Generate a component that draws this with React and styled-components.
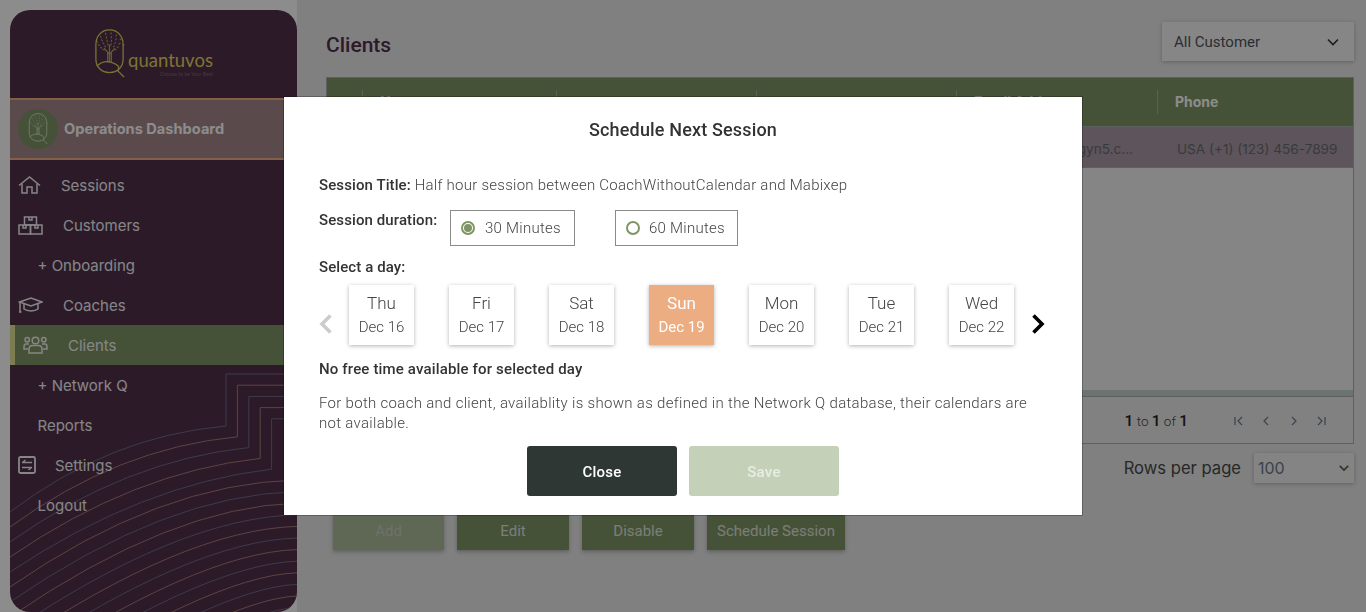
import React from "react";
import styled, { createGlobalStyle } from "styled-components";

const GlobalStyle = createGlobalStyle`
  html, body {
    margin: 0;
    padding: 0;
    height: 100%;
    overflow: hidden;
    background: #fff;
  }
  * {
    box-sizing: border-box;
  }
`;

const DIN = `Roboto, "Liberation Sans", sans-serif`;
const WIDE = `Inter, "Liberation Sans", sans-serif`;

const Page = styled.div`
  display: flex;
  width: 100%;
  height: 100vh;
  font-family: ${DIN};
`;

/* ---------- sidebar ---------- */

const Sidebar = styled.aside`
  position: relative;
  flex: 0 0 287px;
  height: 602px;
  margin: 10px 0 0 10px;
  background: #50304c;
  border-radius: 20px;
  overflow: hidden;
  font-family: ${WIDE};
  color: #fff;
`;

const Waves = styled.svg`
  position: absolute;
  left: 0;
  top: 0;
`;

const LogoArea = styled.div`
  height: 88px;
  display: flex;
  justify-content: center;
  padding-top: 19px;
  color: #e3d360;
`;

const LogoWords = styled.div`
  display: flex;
  flex-direction: column;
  align-items: flex-end;
  margin: 20px 0 0 3px;
`;

const LogoName = styled.span`
  font-family: Lato, sans-serif;
  font-size: 18.5px;
  line-height: 22px;
`;

const LogoTag = styled.span`
  font-family: Lato, sans-serif;
  font-size: 5.2px;
  line-height: 7px;
  color: #7f6a6a;
`;

const Band = styled.div`
  display: flex;
  align-items: center;
  height: 62px;
  padding-left: 8px;
  gap: 6px;
  background: #a4878a;
  border-top: 2px solid #edad82;
  border-bottom: 2px solid #edad82;
  font-size: 14.6px;
  font-weight: 700;
`;

const BandBadge = styled.div`
  width: 40px;
  height: 40px;
  border-radius: 50%;
  background: #7f9564;
  display: flex;
  align-items: center;
  justify-content: center;
  color: #dfe6d4;
`;

const Nav = styled.nav`
  position: relative;
  margin-top: 5px;
`;

const NavItem = styled.div`
  display: flex;
  align-items: center;
  height: 40px;
  gap: ${(p) => p.$gap || "20px"};
  padding-left: ${(p) => (p.$sub ? "27.5px" : "8px")};
  font-size: 15px;
  background: ${(p) => (p.$active ? "#7f9564" : "transparent")};
  border-left: ${(p) => (p.$active ? "5px solid #e3e39a" : "0")};
  color: #f4f4f4;
`;

const NavIcon = styled.svg`
  flex: none;
  fill: none;
  stroke: currentColor;
  stroke-width: 1.5;
`;

/* ---------- main page ---------- */

const Main = styled.main`
  flex: 1;
  min-width: 0;
  background: #e9e9e9;
  padding: 22px 12px 0 29px;
  display: flex;
  flex-direction: column;
`;

const TopRow = styled.div`
  display: flex;
  justify-content: space-between;
  align-items: center;
  height: 39px;
`;

const PageTitle = styled.h1`
  margin: 0;
  padding-top: 6px;
  font-size: 21px;
  font-weight: 500;
  color: #50304c;
`;

const CustomerSelect = styled.div`
  width: 192px;
  height: 39px;
  display: flex;
  align-items: center;
  justify-content: space-between;
  padding: 1px 15px 0 12px;
  background: #f5f5f5;
  box-shadow: 0 1px 4px rgba(0, 0, 0, 0.25);
  font-size: 15px;
  color: #4e5360;
`;

const Table = styled.div`
  margin-top: 16px;
  height: 367px;
  display: flex;
  flex-direction: column;
  border: 1px solid #aab0ac;
  font-family: ${WIDE};
`;

const Columns = `35px 194px 200px 200px 201px 1fr`;

const HeaderRow = styled.div`
  display: grid;
  grid-template-columns: ${Columns};
  height: 49px;
  flex: none;
  background: #7f9564;
  border-bottom: 1px solid #aab0ac;
  align-items: center;
  color: #fff;
  font-size: 14px;
  font-weight: 700;
`;

const HeaderCell = styled.div`
  height: 24px;
  line-height: 24px;
  padding-left: ${(p) => (p.$first ? "0" : "17px")};
  border-left: ${(p) => (p.$first ? "0" : "1px solid #a3b28f")};
`;

const DataRow = styled.div`
  display: grid;
  grid-template-columns: ${Columns};
  height: 41px;
  flex: none;
  padding-top: 3px;
  background: #a99ba7;
  border-bottom: 1px solid #aab0ac;
  align-items: center;
  font-size: 13.6px;
  color: #6a6a70;
`;

const DataCell = styled.div`
  white-space: nowrap;
  overflow: hidden;
  text-align: ${(p) => (p.$right ? "right" : "left")};
  padding: ${(p) => (p.$right ? "0 24px 0 0" : "0 0 0 20px")};
`;

const TableBody = styled.div`
  flex: 1;
  background: #f3f3f3;
`;

const ScrollTrack = styled.div`
  height: 6px;
  flex: none;
  background: #c3d4cd;
`;

const TableFooter = styled.div`
  height: 47px;
  flex: none;
  display: flex;
  align-items: center;
  justify-content: flex-end;
  gap: 43px;
  padding: 1px 24px 0 0;
  background: #ebebeb;
  border-top: 1px solid #aab0ac;
  font-family: ${DIN};
  font-size: 13.5px;
  font-weight: 300;
  color: #444;
`;

const PageCount = styled.span`
  b {
    color: #222;
    font-weight: 500;
    font-size: 15.5px;
  }
`;

const Pager = styled.div`
  display: flex;
  gap: 14px;
  color: #6c7a8a;
`;

const PagerIcon = styled.svg`
  fill: none;
  stroke: currentColor;
  stroke-width: 1.2;
`;

const RowsLine = styled.div`
  margin-top: 9px;
  height: 30px;
  display: flex;
  justify-content: flex-end;
  align-items: center;
  gap: 13px;
  font-family: ${WIDE};
  font-size: 16.6px;
  line-height: 32px;
  color: #4a4a4a;
`;

const RowsSelect = styled.div`
  width: 100px;
  height: 30px;
  display: flex;
  align-items: center;
  justify-content: space-between;
  padding: 0 5px 0 4px;
  background: #f0f0f0;
  box-shadow: 0 1px 4px rgba(0, 0, 0, 0.25);
  font-size: 16px;
  line-height: 30px;
  color: #6c7a8a;
`;

const Actions = styled.div`
  display: flex;
  margin-top: 29px;
  padding-left: 7px;
  gap: 13px;
`;

const ActionButton = styled.div`
  width: ${(p) => p.$w || "112px"};
  height: 38px;
  display: flex;
  align-items: center;
  justify-content: center;
  background: ${(p) => (p.$off ? "#aebd9c" : "#7f9564")};
  box-shadow: 0 2px 4px rgba(0, 0, 0, 0.25);
  font-size: 15px;
  color: ${(p) => (p.$off ? "#c9cfc3" : "#e0e4dc")};
`;

/* ---------- dialog ---------- */

const Overlay = styled.div`
  position: fixed;
  inset: 0;
  display: flex;
  align-items: center;
  justify-content: center;
  background: rgba(0, 0, 0, 0.45);
`;

const Dialog = styled.div`
  width: 798px;
  height: 418px;
  padding: 21px 35px 19px;
  background: #fff;
  box-shadow: 0 0 0 1px rgba(0, 0, 0, 0.25);
  color: #444;
  font-size: 15px;
  font-weight: 300;
  letter-spacing: 0.25px;
  line-height: 20px;
`;

const DialogTitle = styled.h2`
  margin: 0;
  font-size: 18px;
  line-height: 24px;
  font-weight: 500;
  letter-spacing: 0.16px;
  text-align: center;
  color: #333;
`;

const Strong = styled.span`
  font-weight: 500;
  letter-spacing: 0.1px;
  color: #333;
`;

const TitleLine = styled.div`
  margin-top: 33px;
`;

const DurationRow = styled.div`
  display: flex;
  margin-top: 15px;
`;

const DurationLabel = styled(Strong)`
  width: 131px;
`;

const DurationBox = styled.div`
  width: ${(p) => p.$w};
  height: 36px;
  margin-right: 40px;
  display: flex;
  align-items: center;
  gap: ${(p) => p.$gap};
  padding-left: 10px;
  border: 1px solid #8a8a8a;
`;

const Radio = styled.span`
  width: 14px;
  height: 14px;
  border-radius: 50%;
  border: 2px solid #7f9564;
  display: flex;
  align-items: center;
  justify-content: center;
  &::after {
    content: "";
    width: 8px;
    height: 8px;
    border-radius: 50%;
    background: ${(p) => (p.$on ? "#7f9564" : "transparent")};
  }
`;

const SelectLabel = styled(Strong)`
  display: block;
  margin-top: 11px;
`;

const DaysRow = styled.div`
  display: flex;
  align-items: center;
  margin-top: 8px;
`;

const Chevron = styled.svg`
  flex: none;
  margin-top: 18px;
  fill: none;
  stroke: ${(p) => p.$color};
  stroke-width: 3.6;
`;

const Days = styled.div`
  display: flex;
  gap: 35px;
  margin: 0 18px 0 17px;
`;

const DayCard = styled.div`
  width: 65px;
  height: 60px;
  display: flex;
  flex-direction: column;
  align-items: center;
  padding-top: 7px;
  background: ${(p) => (p.$on ? "#edad82" : "#fff")};
  color: ${(p) => (p.$on ? "#fff" : "#444")};
  font-weight: ${(p) => (p.$on ? 400 : 300)};
  letter-spacing: 0;
  box-shadow: 0 1px 4px rgba(0, 0, 0, 0.3);
`;

const Weekday = styled.span`
  font-size: 17px;
  line-height: 22px;
`;

const DayDate = styled.span`
  margin-top: 3px;
  font-size: 15px;
  line-height: 20px;
`;

const NoTime = styled(Strong)`
  display: block;
  margin-top: 14px;
  letter-spacing: 0.16px;
`;

const Note = styled.p`
  margin: 14px 0 0;
  letter-spacing: 0.3px;
`;

const DialogButtons = styled.div`
  display: flex;
  justify-content: center;
  gap: 12px;
  margin-top: 13px;
`;

const DialogButton = styled.button`
  all: unset;
  width: 150px;
  height: 50px;
  text-align: center;
  border-radius: 3px;
  font-size: 15px;
  font-weight: 500;
  line-height: 52px;
  color: ${(p) => (p.$dark ? "#fff" : "#e8ede1")};
  background: ${(p) => (p.$dark ? "#2f3735" : "#c5d0b9")};
`;

/* ---------- drawings ---------- */

// tree branches fan out from the trunk inside the arch
const rays = [];
[7, 11, 15, 19].forEach((r, ring) => {
  for (let a = -165 + ring * 6; a <= -15; a += 30 - ring * 3) {
    const rad = (a * Math.PI) / 180;
    const x = 17 + r * Math.cos(rad) * 0.8;
    const y = 25 + r * Math.sin(rad);
    rays.push(`M${x.toFixed(1)} ${y.toFixed(1)}l${(2.4 * Math.cos(rad)).toFixed(1)} ${(2.4 * Math.sin(rad)).toFixed(1)}`);
  }
});

const LogoMark = ({ size = 31, color = "#e3d360" }) => (
  <svg width={size} height={size * 1.58} viewBox="0 0 34 54" fill="none" stroke={color} strokeWidth="1.4">
    <path d="M17 1C8 1 2 8 2 17V33C2 42 8 48 17 48C26 48 32 42 32 33V17C32 8 26 1 17 1Z" />
    <path d="M3 41C8 36 14 35 20 37C26 39 29 42 26 46L33 53" />
    <path d="M17 37V17M15 37V25M19 37V25M17 28L11 21M17 28L23 21" opacity="0.75" />
    <path d={rays.join("")} strokeWidth="1.2" opacity="0.7" />
  </svg>
);

const HomeIcon = () => (
  <NavIcon width="23" height="18" viewBox="0 0 23 18">
    <path d="M1 9.5L11.5 1L22 9.5" />
    <path d="M4 7.5V17H9V11H14V17H19V7.5" />
  </NavIcon>
);

const BoxesIcon = () => (
  <NavIcon width="25" height="19" viewBox="0 0 25 19">
    <rect x="6.5" y="1" width="12" height="8" />
    <rect x="1" y="9" width="11.5" height="9" />
    <rect x="12.5" y="9" width="11.5" height="9" />
    <path d="M11 1V4H14V1M5 9V12H8V9M17 9V12H20V9" />
  </NavIcon>
);

const CapIcon = () => (
  <NavIcon width="25" height="16" viewBox="0 0 25 16">
    <path d="M1.5 5L13 1L24 5L13 9Z" />
    <path d="M6 7V12C9 14.5 17 14.5 20 12V7" />
    <path d="M2 5.5V15M1 15H3.5" />
  </NavIcon>
);

const UsersIcon = () => (
  <NavIcon width="25" height="18" viewBox="0 0 25 18">
    <circle cx="12.5" cy="4.5" r="3.3" />
    <circle cx="4.2" cy="3.7" r="2.2" />
    <circle cx="20.8" cy="3.7" r="2.2" />
    <path d="M6 17V13C6 10.5 8 9.5 10 9.5H15C17 9.5 19 10.5 19 13V17Z" />
    <path d="M6 8H3C1.5 8 1 9.5 1 11V13H5M19 8H22C23.5 8 24 9.5 24 11V13H20" />
  </NavIcon>
);

const SettingsIcon = () => (
  <NavIcon width="18" height="18" viewBox="0 0 18 18">
    <rect x="1" y="1" width="16" height="16" rx="1.5" strokeWidth="1.8" />
    <path d="M4 6.5H14M7.5 4L4.5 6.5M4 11.5H14M10.5 14L13.5 11.5" />
  </NavIcon>
);

const SmallChevronDown = ({ color = "currentColor", w = 2, width = 12 }) => (
  <svg width={width} height="8" viewBox="0 0 12 8" fill="none" stroke={color} strokeWidth={w}>
    <path d="M1 1.5L6 6.5L11 1.5" />
  </svg>
);

const pagerPaths = ["M2 1V9M9 1L5 5L9 9", "M7 1L3 5L7 9", "M3 1L7 5L3 9", "M1 1L5 5L1 9M8 1V9"];

// concentric lines in the lower part of the sidebar
const wavePath = (i) => {
  const startY = 502 + 15 * i;
  if (i < 5) {
    const x = 216 + 11.4 * i;
    const y = 416 + 10.8 * i;
    const top = 364 + 11.2 * i;
    return `M0 ${startY} Q${100 + 8 * i} ${426 + 12 * i} ${x} ${y} V${top} H287`;
  }
  const endY = 470 + 11.6 * (i - 5);
  return `M0 ${startY} Q${120 + 6 * i} ${endY + 3} 287 ${endY}`;
};

const waves = Array.from({ length: 18 }, (_, i) => i);

const days = [
  ["Thu", "Dec 16"],
  ["Fri", "Dec 17"],
  ["Sat", "Dec 18"],
  ["Sun", "Dec 19"],
  ["Mon", "Dec 20"],
  ["Tue", "Dec 21"],
  ["Wed", "Dec 22"],
];

export default function App() {
  return (
    <Page>
      <GlobalStyle />
      <Sidebar>
        <Waves width="287" height="602" viewBox="0 0 287 602" fill="none">
          {waves.map((i) => (
            <path key={i} d={wavePath(i)} stroke={i % 2 ? "#a97c74" : "#716d83"} strokeWidth="1" />
          ))}
        </Waves>
        <LogoArea>
          <LogoMark />
          <LogoWords>
            <LogoName>quantuvos</LogoName>
            <LogoTag>Choose to be Your Best</LogoTag>
          </LogoWords>
        </LogoArea>
        <Band>
          <BandBadge>
            <LogoMark size={20} color="#dfe6d4" />
          </BandBadge>
          Operations Dashboard
        </Band>
        <Nav>
          <NavItem><HomeIcon />Sessions</NavItem>
          <NavItem><BoxesIcon />Customers</NavItem>
          <NavItem $sub>+ Onboarding</NavItem>
          <NavItem><CapIcon />Coaches</NavItem>
          <NavItem $active><UsersIcon />Clients</NavItem>
          <NavItem $sub>+ Network Q</NavItem>
          <NavItem $sub>Reports</NavItem>
          <NavItem $gap="19px"><SettingsIcon />Settings</NavItem>
          <NavItem $sub>Logout</NavItem>
        </Nav>
      </Sidebar>

      <Main>
        <TopRow>
          <PageTitle>Clients</PageTitle>
          <CustomerSelect>
            All Customer
            <SmallChevronDown color="#333" w={1.6} />
          </CustomerSelect>
        </TopRow>
        <Table>
          <HeaderRow>
            <HeaderCell $first />
            <HeaderCell>Name</HeaderCell>
            <HeaderCell />
            <HeaderCell />
            <HeaderCell>Email Address</HeaderCell>
            <HeaderCell>Phone</HeaderCell>
          </HeaderRow>
          <DataRow>
            <DataCell />
            <DataCell>Mabixep</DataCell>
            <DataCell />
            <DataCell />
            <DataCell $right>mabixep@xgyn5.c...</DataCell>
            <DataCell>USA (+1) (123) 456-7899</DataCell>
          </DataRow>
          <TableBody />
          <ScrollTrack />
          <TableFooter>
            <PageCount>
              <b>1</b> to <b>1</b> of <b>1</b>
            </PageCount>
            <Pager>
              {pagerPaths.map((d) => (
                <PagerIcon key={d} width="14" height="10" viewBox="0 0 10 10">
                  <path d={d} />
                </PagerIcon>
              ))}
            </Pager>
          </TableFooter>
        </Table>
        <RowsLine>
          Rows per page
          <RowsSelect>
            100
            <SmallChevronDown color="#56663e" width={10} />
          </RowsSelect>
        </RowsLine>
        <Actions>
          <ActionButton $off $w="111px">Add</ActionButton>
          <ActionButton>Edit</ActionButton>
          <ActionButton>Disable</ActionButton>
          <ActionButton $w="138px">Schedule Session</ActionButton>
        </Actions>
      </Main>

      <Overlay>
        <Dialog>
          <DialogTitle>Schedule Next Session</DialogTitle>
          <TitleLine>
            <Strong>Session Title:</Strong> Half hour session between CoachWithoutCalendar and Mabixep
          </TitleLine>
          <DurationRow>
            <DurationLabel>Session duration:</DurationLabel>
            <DurationBox $w="125px" $gap="10px">
              <Radio $on />
              30 Minutes
            </DurationBox>
            <DurationBox $w="123px" $gap="9px">
              <Radio />
              60 Minutes
            </DurationBox>
          </DurationRow>
          <SelectLabel>Select a day:</SelectLabel>
          <DaysRow>
            <Chevron $color="#ccc" width="13" height="20" viewBox="0 0 13 20">
              <path d="M11.5 1.5L3 10L11.5 18.5" />
            </Chevron>
            <Days>
              {days.map(([day, date]) => (
                <DayCard key={day} $on={day === "Sun"}>
                  <Weekday>{day}</Weekday>
                  <DayDate>{date}</DayDate>
                </DayCard>
              ))}
            </Days>
            <Chevron $color="#000" width="13" height="20" viewBox="0 0 13 20">
              <path d="M1.5 1.5L10 10L1.5 18.5" />
            </Chevron>
          </DaysRow>
          <NoTime>No free time available for selected day</NoTime>
          <Note>
            For both coach and client, availablity is shown as defined in the Network Q database, their calendars are
            not available.
          </Note>
          <DialogButtons>
            <DialogButton $dark>Close</DialogButton>
            <DialogButton>Save</DialogButton>
          </DialogButtons>
        </Dialog>
      </Overlay>
    </Page>
  );
}
